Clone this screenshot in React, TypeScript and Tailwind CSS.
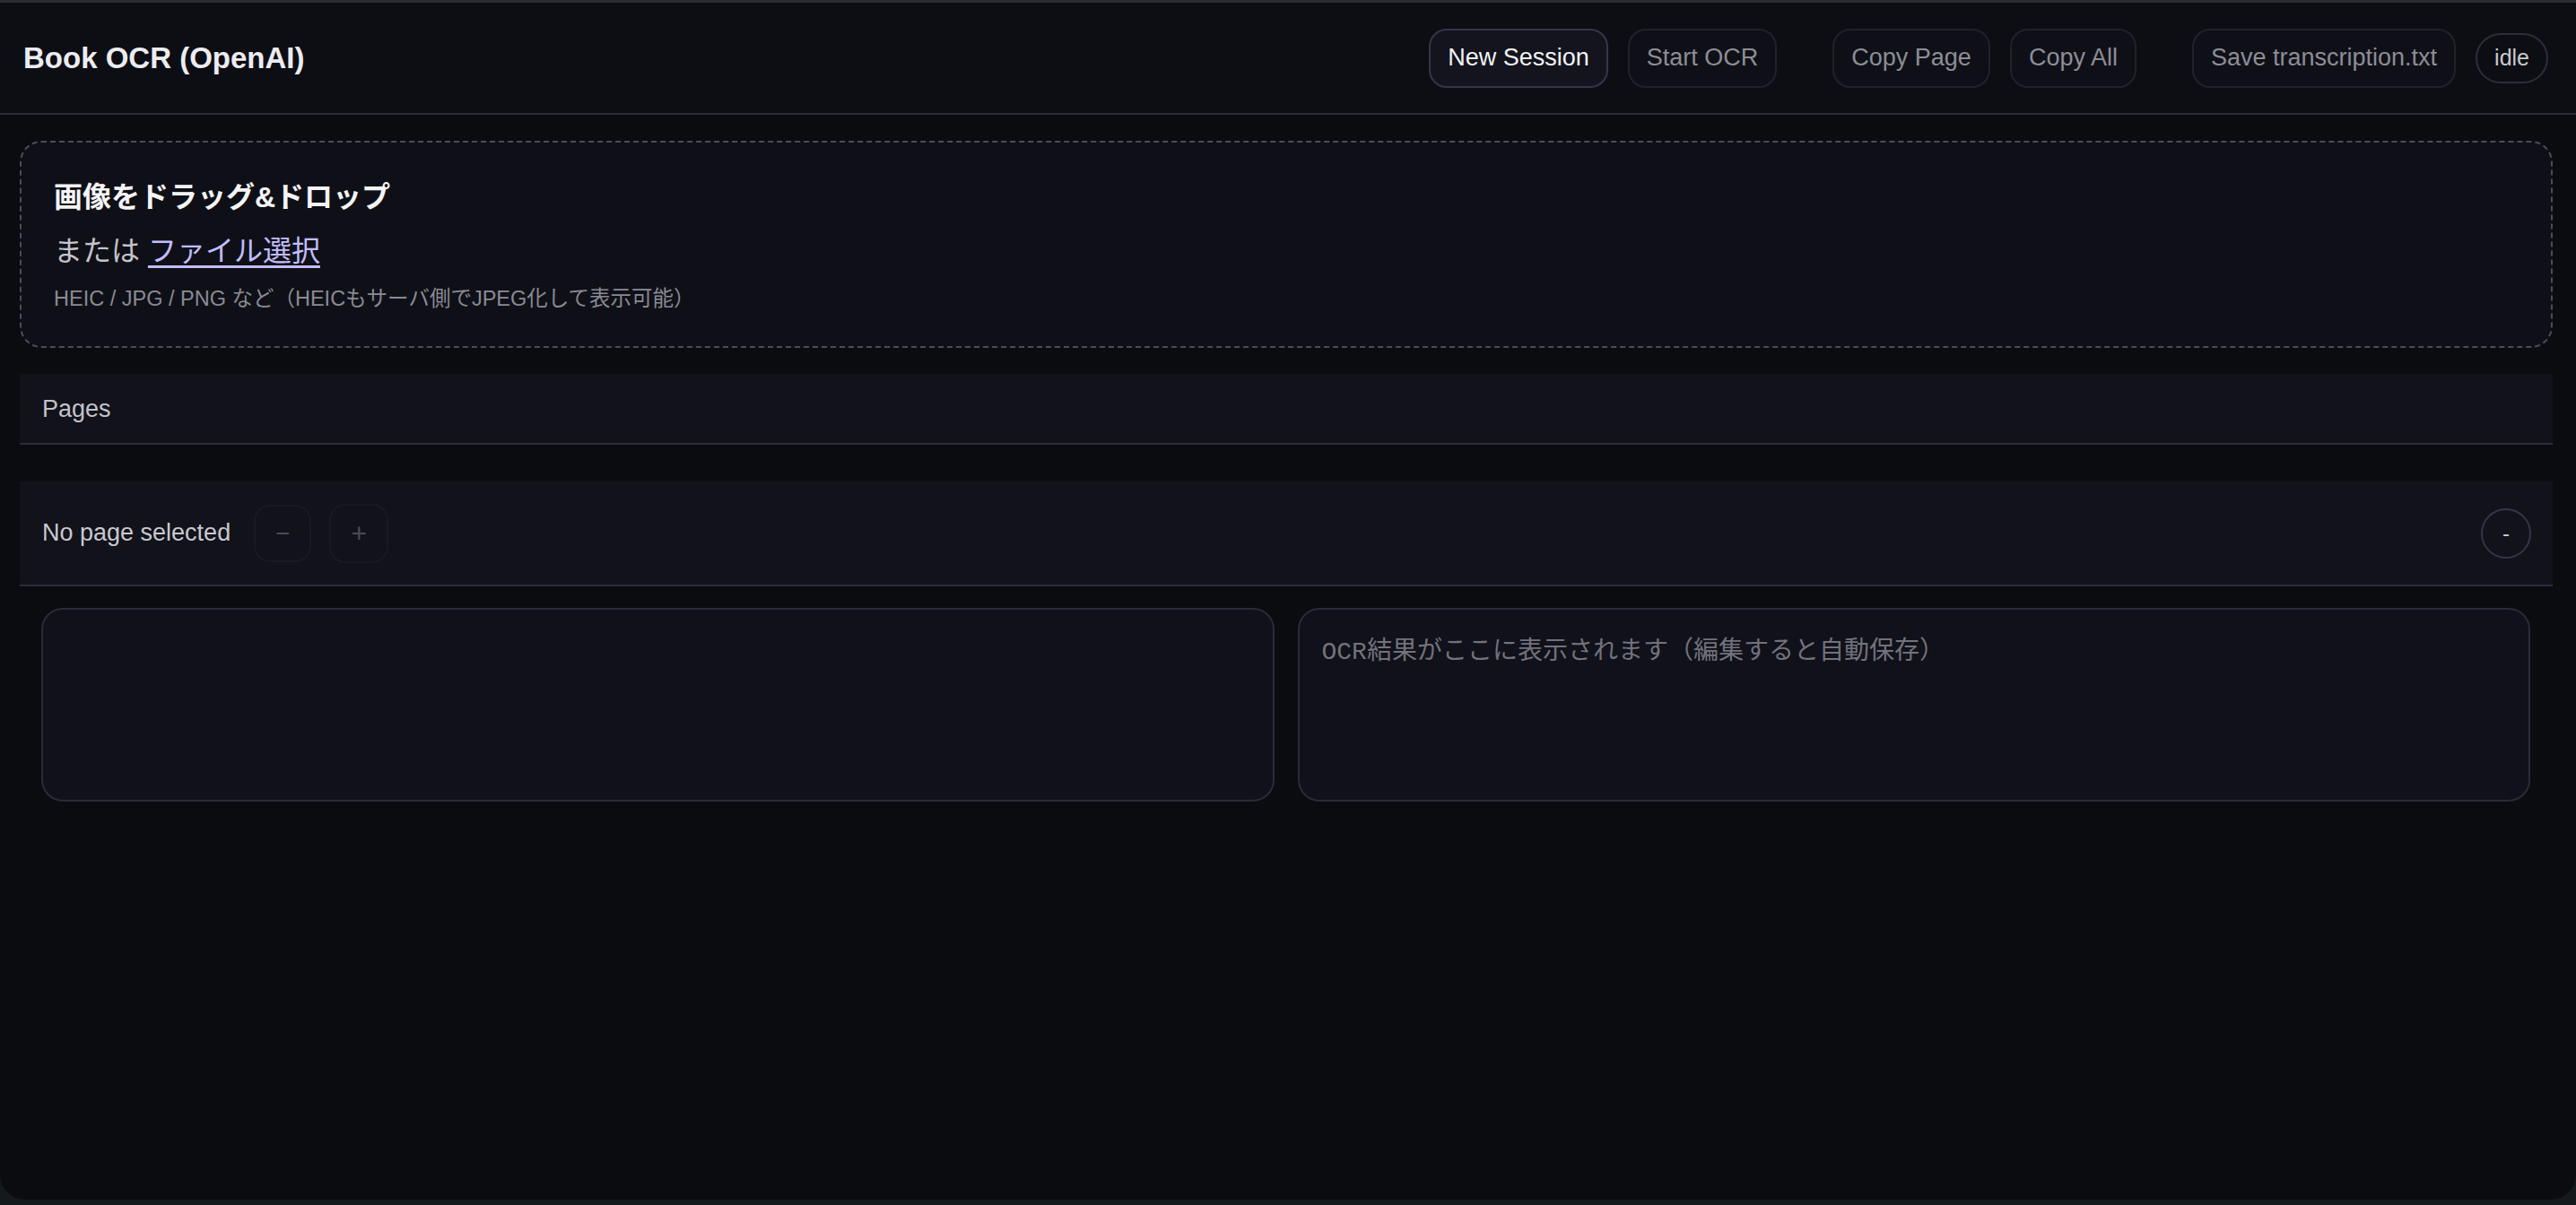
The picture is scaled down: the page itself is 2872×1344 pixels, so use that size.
import { useState } from 'react'

const FONT = { fontFamily: '"Liberation Sans", "Noto Sans CJK JP", sans-serif' }
const MONO = { fontFamily: '"Liberation Mono", "Noto Sans CJK JP", monospace' }

function HeaderButton({ label, primary = false }: { label: string; primary?: boolean }) {
  return (
    <button
      className={
        primary
          ? 'h-[66px] px-[19px] rounded-[20px] border-2 border-[#34354a] bg-[#13141d] text-[27px] text-[#f2f2f5]'
          : 'h-[66px] px-[19px] rounded-[20px] border-2 border-[#20212c] bg-[#0f1017] text-[27px] text-[#8d8d96]'
      }
    >
      {label}
    </button>
  )
}

export default function App() {
  const [text, setText] = useState('')

  return (
    <div className="w-[2872px] h-[1344px] bg-[#141a1c]" style={FONT}>
      <div className="h-[1338px] flex flex-col bg-[#0b0c10] border-t-[3px] border-[#2b2b31] rounded-b-[28px] overflow-hidden">
        {/* header */}
        <header className="h-[125px] shrink-0 flex items-center justify-between pl-[26px] pr-[31px] bg-[#0d0e14] border-b-2 border-[#2c2d3b]">
          <h1 className="text-[33px] font-bold text-[#ececf0]">Book OCR (OpenAI)</h1>
          <div className="flex items-center">
            <div className="flex items-center gap-[22px]">
              <HeaderButton label="New Session" primary />
              <HeaderButton label="Start OCR" />
            </div>
            <div className="flex items-center gap-[22px] ml-[62px]">
              <HeaderButton label="Copy Page" />
              <HeaderButton label="Copy All" />
            </div>
            <div className="flex items-center gap-[22px] ml-[62px]">
              <HeaderButton label="Save transcription.txt" />
              <span className="h-[56px] px-[19px] flex items-center rounded-full border-2 border-[#2c2d3b] text-[25px] text-[#c9c9d0]">
                idle
              </span>
            </div>
          </div>
        </header>

        <main className="flex-1 flex flex-col pl-[22px] pr-[26px]">
          {/* drop zone */}
          <div className="mt-[29px] h-[231px] rounded-[24px] border-2 border-dashed border-[#4a4b5c] bg-[#0f1017] px-[36px] pt-[42px]">
            <div className="text-[32px] leading-[38px] font-bold text-[#f4f4f6]">画像をドラッグ&amp;ドロップ</div>
            <div className="mt-[19px] text-[32px] leading-[44px] text-[#c4c4cc]">
              または{' '}
              <span className="text-[#c2bdff] underline underline-offset-[5px] cursor-pointer">ファイル選択</span>
            </div>
            <div className="mt-[16px] text-[23.5px] leading-[30px] text-[#8a8a94]">
              HEIC / JPG / PNG など（HEICもサーバ側でJPEG化して表示可能）
            </div>
          </div>

          {/* pages strip */}
          <div className="mt-[29px] h-[79px] flex items-center px-[25px] pt-[2px] bg-[#11121a] border-b-2 border-[#2c2d3b]">
            <span className="text-[27px] text-[#c2c2ca]">Pages</span>
          </div>

          {/* page toolbar */}
          <div className="mt-[41px] h-[117px] flex items-center justify-between pl-[25px] pr-[24px] bg-[#11121a] border-b-2 border-[#2c2d3b]">
            <div className="flex items-center">
              <span className="text-[27px] text-[#c8c8d0]">No page selected</span>
              <div className="flex items-center gap-[20px] ml-[26px]">
                <button disabled className="w-[64px] h-[64px] rounded-[18px] border-2 border-[#181922] text-[28px] text-[#4a4a55]">
                  −
                </button>
                <button disabled className="w-[66px] h-[66px] rounded-[18px] border-2 border-[#181922] text-[30px] text-[#4a4a55]">
                  +
                </button>
              </div>
            </div>
            <button className="w-[56px] h-[56px] rounded-full border-2 border-[#34354a] text-[24px] text-[#c8c8d0]">-</button>
          </div>

          {/* image + text panels */}
          <div className="mt-[24px] grid grid-cols-2 gap-[26px] pl-[24px] pr-[25px]">
            <div className="h-[216px] rounded-[24px] border-2 border-[#2a2b3a] bg-[#10111a]" />
            <textarea
              value={text}
              onChange={(e) => setText(e.target.value)}
              placeholder="OCR結果がここに表示されます（編集すると自動保存）"
              className="h-[216px] resize-none rounded-[24px] border-2 border-[#2a2b3a] bg-[#10111a] px-[25px] pt-[29px] pb-[25px] text-[28px] leading-[38px] text-[#d0d0d6] placeholder:text-[#72727c] outline-none"
              style={MONO}
            />
          </div>
        </main>
      </div>
    </div>
  )
}
